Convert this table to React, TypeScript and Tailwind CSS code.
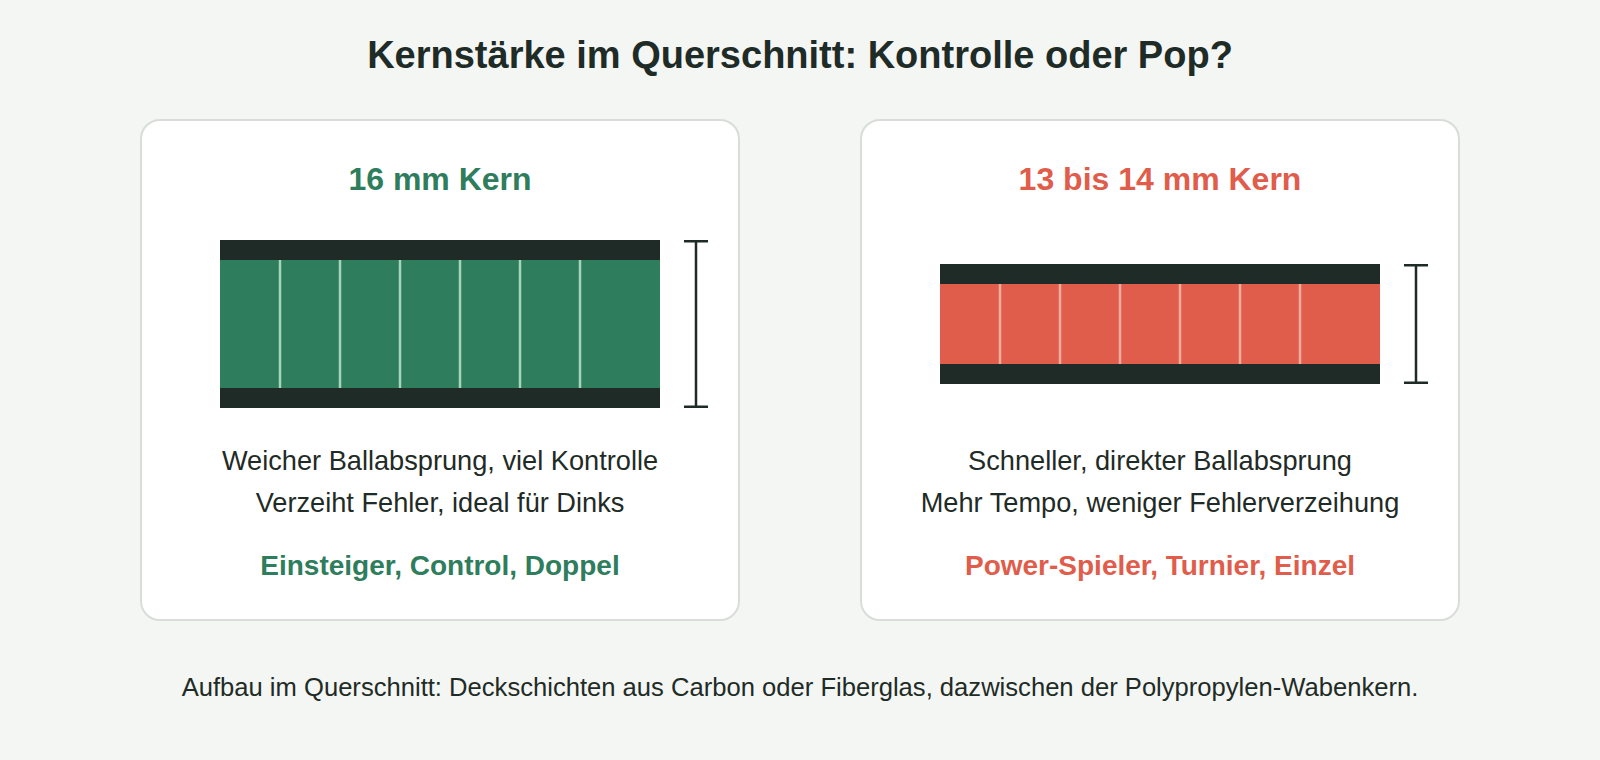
import React from 'react';

type Core = {
  id: string;
  title: string;
  color: string;
  lineColor: string;
  titleClass: string;
  tagClass: string;
  coreHeight: number;
  lines: string[];
  tags: string;
};

const cores: Core[] = [
  {
    id: 'thick',
    title: '16 mm Kern',
    color: '#2e7d5c',
    lineColor: '#a6d4bb',
    titleClass: 'text-[#2e7d5c]',
    tagClass: 'text-[#2e7d5c]',
    coreHeight: 128,
    lines: ['Weicher Ballabsprung, viel Kontrolle', 'Verzeiht Fehler, ideal für Dinks'],
    tags: 'Einsteiger, Control, Doppel',
  },
  {
    id: 'thin',
    title: '13 bis 14 mm Kern',
    color: '#e05d4b',
    lineColor: '#f6ab9e',
    titleClass: 'text-[#e05d4b]',
    tagClass: 'text-[#e05d4b]',
    coreHeight: 80,
    lines: ['Schneller, direkter Ballabsprung', 'Mehr Tempo, weniger Fehlerverzeihung'],
    tags: 'Power-Spieler, Turnier, Einzel',
  },
];

// cross section: skin / honeycomb core / skin, plus a thickness marker
const CrossSection: React.FC<{ core: Core }> = ({ core }) => {
  const skin = 20;
  const total = core.coreHeight + skin * 2;
  const top = (168 - total) / 2;
  const left = 78;
  const width = 440;
  const cells = [1, 2, 3, 4, 5, 6];

  return (
    <svg width="596" height="168" viewBox="0 0 596 168" className="block">
      <rect x={left} y={top} width={width} height={total} fill="#1f2b26" />
      <rect x={left} y={top + skin} width={width} height={core.coreHeight} fill={core.color} />
      {cells.map((i) => (
        <line
          key={i}
          x1={left + i * 60}
          x2={left + i * 60}
          y1={top + skin}
          y2={top + skin + core.coreHeight}
          stroke={core.lineColor}
          strokeWidth="2.5"
        />
      ))}
      <g stroke="#1f2b26" strokeWidth="2.5">
        <line x1="554" x2="554" y1={top} y2={top + total} />
        <line x1="542" x2="566" y1={top + 1.25} y2={top + 1.25} />
        <line x1="542" x2="566" y1={top + total - 1.25} y2={top + total - 1.25} />
      </g>
    </svg>
  );
};

const App: React.FC = () => {
  return (
    <div
      className="min-h-[760px] bg-[#f3f6f3] text-[#1f2b26] flex flex-col items-center"
      style={{ fontFamily: '"Liberation Sans", Arial, sans-serif' }}
    >
      <h1 className="pt-[32px] text-[38px] leading-[46px] font-bold">
        Kernstärke im Querschnitt: Kontrolle oder Pop?
      </h1>

      <div className="mt-[41px] flex gap-[120px]">
        {cores.map((core) => (
          <div
            key={core.id}
            className="w-[600px] h-[502px] bg-white border-2 border-[#d8ddd9] rounded-[20px] flex flex-col items-center pt-[38px]"
          >
            <h2 className={`text-[32px] leading-[40px] font-bold ${core.titleClass}`}>{core.title}</h2>
            <div className="mt-[41px]">
              <CrossSection core={core} />
            </div>
            <div className="mt-[32px] text-[27.2px] leading-[42px] text-center">
              {core.lines.map((l) => (
                <div key={l}>{l}</div>
              ))}
            </div>
            <div className={`mt-[24px] text-[28px] leading-[36px] font-bold ${core.tagClass}`}>{core.tags}</div>
          </div>
        ))}
      </div>

      <p className="mt-[50px] text-[25.6px] leading-[32px]">
        Aufbau im Querschnitt: Deckschichten aus Carbon oder Fiberglas, dazwischen der Polypropylen-Wabenkern.
      </p>
    </div>
  );
};

export default App;
